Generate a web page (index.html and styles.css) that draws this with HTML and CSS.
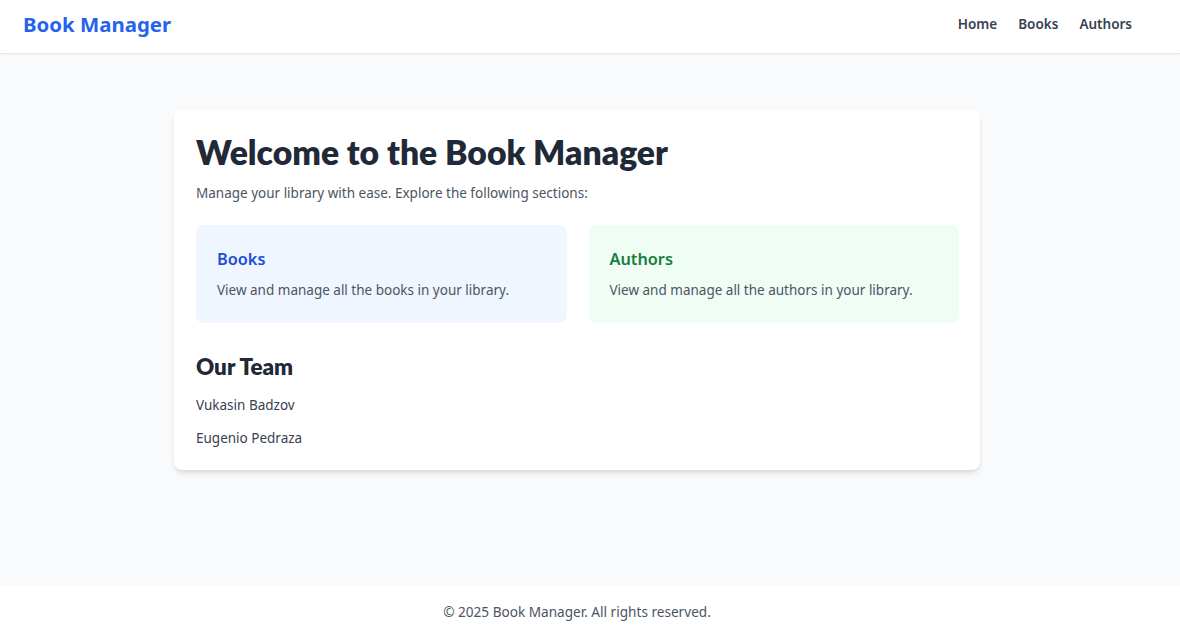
FILE: index.html
```html
<!DOCTYPE html>
<html lang="en">
<head>
<meta charset="utf-8">
<title>Book Manager</title>
<link rel="stylesheet" href="styles.css">
</head>
<body>
<header class="topbar">
  <a class="logo" href="#">Book Manager</a>
  <nav class="nav">
    <a href="#">Home</a>
    <a href="#">Books</a>
    <a href="#">Authors</a>
  </nav>
</header>
<main class="main">
  <section class="panel">
    <h1 class="title">Welcome to the Book Manager</h1>
    <p class="lead">Manage your library with ease. Explore the following sections:</p>
    <div class="sections">
      <div class="section section-blue">
        <h2 class="section-title">Books</h2>
        <p class="section-text">View and manage all the books in your library.</p>
      </div>
      <div class="section section-green">
        <h2 class="section-title">Authors</h2>
        <p class="section-text">View and manage all the authors in your library.</p>
      </div>
    </div>
    <h2 class="team-title">Our Team</h2>
    <ul class="team">
      <li>Vukasin Badzov</li>
      <li>Eugenio Pedraza</li>
    </ul>
  </section>
</main>
<footer class="footer">© 2025 Book Manager. All rights reserved.</footer>
</body>
</html>
```

FILE: styles.css
```css
* { box-sizing: border-box; }
html, body { margin: 0; padding: 0; }
body {
  font-family: "Noto Sans", "Open Sans", sans-serif;
  background: #f9fafb;
  color: #1f2937;
  min-height: 100vh;
  display: flex;
  flex-direction: column;
}
a { text-decoration: none; }
.topbar {
  height: 54px;
  background: #fff;
  border-bottom: 1px solid #e5e7eb;
  box-shadow: 0 1px 2px rgba(0,0,0,0.04);
  display: flex;
  align-items: center;
  justify-content: space-between;
  padding: 0 48px 6px 23px;
}
.logo {
  color: #2563eb;
  font-size: 20.4px;
  font-weight: 700;
}
.nav { display: flex; gap: 21px; }
.nav a {
  color: #374151;
  font-size: 13.5px;
  font-weight: 600;
}
.main {
  flex: 1;
  display: flex;
  justify-content: center;
  align-items: flex-start;
  padding: 56px 26px 0 0;
}
.panel {
  width: 806px;
  background: #fff;
  border-radius: 8px;
  box-shadow: 0 4px 6px -1px rgba(0,0,0,0.1), 0 2px 4px -2px rgba(0,0,0,0.1);
  padding: 22px 21px 22px 22px;
}
.title {
  font-family: "Lato", "Noto Sans", sans-serif;
  margin: 0;
  font-size: 33.7px;
  line-height: 40px;
  font-weight: 800;
  color: #1f2937;
}
.lead {
  margin: 11px 0 0;
  font-size: 13.5px;
  line-height: 20px;
  color: #4b5563;
}
.sections {
  margin-top: 22px;
  display: grid;
  grid-template-columns: 1fr 1fr;
  gap: 22px;
}
.section {
  border-radius: 8px;
  padding: 22px 21px 23px;
}
.section-blue { background: #eff6ff; }
.section-green { background: #f0fdf4; }
.section-title {
  margin: 0;
  font-size: 16.3px;
  line-height: 24px;
  font-weight: 600;
}
.section-blue .section-title { color: #1d4ed8; }
.section-green .section-title { color: #15803d; }
.section-text {
  margin: 9px 0 0;
  font-size: 13.5px;
  line-height: 20px;
  color: #4b5563;
}
.team-title {
  font-family: "Lato", "Noto Sans", sans-serif;
  margin: 30px 0 0;
  font-size: 22.4px;
  line-height: 28px;
  font-weight: 800;
  color: #1f2937;
}
.team {
  list-style: none;
  margin: 14px 0 0;
  padding: 0;
  display: flex;
  flex-direction: column;
  gap: 13px;
}
.team li {
  font-size: 13.5px;
  line-height: 20px;
  color: #374151;
}
.footer {
  height: 44px;
  background: #fff;
  display: flex;
  align-items: center;
  justify-content: center;
  padding: 6px 26px 0 0;
  font-size: 13.6px;
  color: #4b5563;
}
```
